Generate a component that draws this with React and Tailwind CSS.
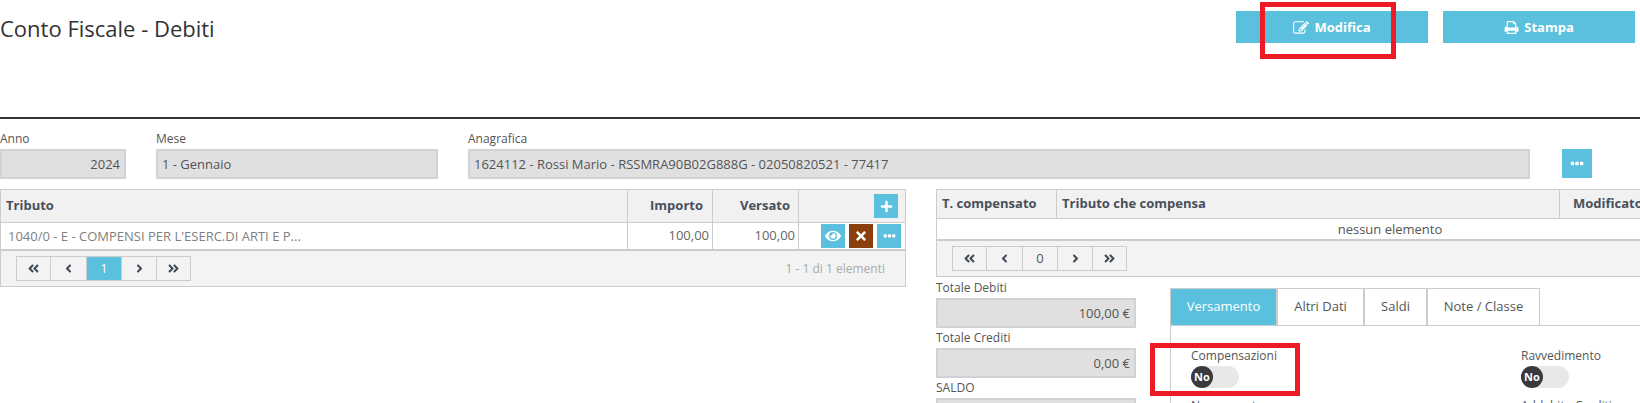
import React from "react";
import { FaPlus, FaEye, FaTimes, FaAngleDoubleLeft, FaAngleLeft, FaAngleRight, FaAngleDoubleRight } from "react-icons/fa";

const Fa4 = ({ d, className = "" }) => (
  <svg viewBox="0 0 1792 1792" fill="currentColor" className={className}><path d={d} /></svg>
);
const EDIT = "M888 1184l116-116-152-152-116 116v56h96v96h56zm440-720q-16-16-33 1l-350 350q-17 17-1 33t33-1l350-350q17-17 1-33zm80 594v190q0 119-84.5 203.5t-203.5 84.5h-832q-119 0-203.5-84.5t-84.5-203.5v-832q0-119 84.5-203.5t203.5-84.5h832q63 0 117 25 15 7 18 23 3 17-9 29l-49 49q-14 14-32 8-23-6-45-6h-832q-66 0-113 47t-47 113v832q0 66 47 113t113 47h832q66 0 113-47t47-113v-126q0-13 9-22l64-64q15-15 35-7t20 29zm-96-738l288 288-672 672h-288v-288zm444 132l-92 92-288-288 92-92q28-28 68-28t68 28l152 152q28 28 28 68t-28 68z";
const PRINT = "M448 1536h896v-256h-896v256zm0-640h896v-384h-160q-40 0-68-28t-28-68v-160h-640v640zm1152 64q0-26-19-45t-45-19-45 19-19 45 19 45 45 19 45-19 19-45zm128 0v416q0 13-9.5 22.5t-22.5 9.5h-224v160q0 40-28 68t-68 28h-960q-40 0-68-28t-28-68v-160h-224q-13 0-22.5-9.5t-9.5-22.5v-416q0-79 56.5-135.5t135.5-56.5h64v-544q0-40 28-68t68-28h672q40 0 88 20t76 48l152 152q28 28 48 76t20 88v256h64q79 0 135.5 56.5t56.5 135.5z";
const DOTS = "M576 736v192q0 40-28 68t-68 28h-192q-40 0-68-28t-28-68v-192q0-40 28-68t68-28h192q40 0 68 28t28 68zm512 0v192q0 40-28 68t-68 28h-192q-40 0-68-28t-28-68v-192q0-40 28-68t68-28h192q40 0 68 28t28 68zm512 0v192q0 40-28 68t-68 28h-192q-40 0-68-28t-28-68v-192q0-40 28-68t68-28h192q40 0 68 28t28 68z";

const Field = ({ label, value, right, className = "" }) => (
  <div className={className}>
    <div className="h-[20px] text-[12px] leading-[20px] text-[#555]">{label}</div>
    <div className={`h-[30px] bg-[#e0e0e0] border-2 border-[#cfd2d6] text-[13px] leading-[27px] text-[#555] px-1 whitespace-nowrap overflow-hidden ${right ? "text-right" : ""}`}>{value}</div>
  </div>
);

const Pager = ({ page, active }) => {
  const cells = [[<FaAngleDoubleLeft />, 33], [<FaAngleLeft />, 36], [page, 35], [<FaAngleRight />, 35], [<FaAngleDoubleRight />, 34]];
  return (
    <div className="flex h-[25px] border border-[#ccc]">
      {cells.map(([c, w], i) => (
        <div key={i} style={{ width: w }} className={`flex items-center justify-center text-[13px] ${i ? "border-l border-[#ccc]" : ""} ${i === 2 ? (active ? "bg-[#5bc0de] text-white" : "text-[#555]") : "text-[#444b58]"}`}>{c}</div>
      ))}
    </div>
  );
};

const Btn = ({ children, color = "bg-[#5bc0de]" }) => (
  <div className={`w-6 h-6 flex items-center justify-center text-white ${color}`}>{children}</div>
);

const Toggle = () => (
  <div className="w-12 h-[22px] rounded-full bg-[#e8e8e8]">
    <div className="w-[22px] h-[22px] rounded-full bg-[#3a3a3e] text-white text-[11px] font-bold leading-[22px] text-center">No</div>
  </div>
);

const Th = ({ children, className = "" }) => (
  <div className={`h-full flex items-center text-[13px] font-bold text-[#484f5b] whitespace-nowrap ${className}`}>{children}</div>
);

export default function App() {
  return (
    <div className="relative w-[1640px] h-[403px] overflow-hidden bg-white font-['Open_Sans',sans-serif]">
      <div className="flex h-[117px] items-start">
        <h1 className="mt-[10px] text-[22px] leading-[36px] text-[#333]">Conto Fiscale - Debiti</h1>
        <div className="ml-auto mt-[11px] mr-[5px] flex gap-[15px]">
          <div className="w-[192px] h-8 pt-px bg-[#5bc0de] text-white text-[13px] font-bold flex items-center justify-center gap-[5px]"><Fa4 d={EDIT} className="w-[16px] h-[16px]" />Modifica</div>
          <div className="w-[192px] h-8 pt-px bg-[#5bc0de] text-white text-[13px] font-bold flex items-center justify-center gap-[5px]"><Fa4 d={PRINT} className="w-[15px] h-[15px]" />Stampa</div>
        </div>
      </div>
      <div className="h-[2px] bg-[#333]" />

      <div className="flex mt-[10px]">
        <Field className="w-[126px]" label="Anno" value="2024" right />
        <Field className="w-[282px] ml-[30px]" label="Mese" value="1 - Gennaio" />
        <Field className="w-[1062px] ml-[30px]" label="Anagrafica" value="1624112 - Rossi Mario - RSSMRA90B02G888G - 02050820521 - 77417" />
        <div className="ml-[32px] mt-[20px] w-[30px] h-[29px] bg-[#5bc0de] flex items-center justify-center text-white"><Fa4 d={DOTS} className="w-[16px] h-[16px]" /></div>
      </div>

      <div className="flex mt-[10px] items-start">
        <div className="w-[906px] border border-[#ccc] shrink-0">
          <div className="flex h-[33px] bg-[#f1f1f1] border-b border-[#ccc]">
            <Th className="w-[626px] pl-[5px]">Tributo</Th>
            <Th className="w-[85px] justify-end pr-[9px] border-l border-[#ccc]">Importo</Th>
            <Th className="w-[86px] justify-end pr-[8px] border-l border-[#ccc]">Versato</Th>
            <div className="flex-1 border-l border-[#ccc] flex items-center justify-end pr-[7px]"><Btn><FaPlus className="text-[13px]" /></Btn></div>
          </div>
          <div className="flex h-[28px] border-b-2 border-[#ccc] text-[13px]">
            <div className="w-[626px] pl-[7px] leading-[26px] text-[#808080] whitespace-nowrap">1040/0 - E - COMPENSI PER L'ESERC.DI ARTI E P...</div>
            <div className="w-[85px] text-right pr-[3px] leading-[25px] text-[#666] border-l border-[#ccc]">100,00</div>
            <div className="w-[86px] text-right pr-[3px] leading-[25px] text-[#666] border-l border-[#ccc]">100,00</div>
            <div className="flex-1 border-l border-[#ccc] flex justify-end items-start pt-[1px] pr-[4px] gap-1">
              <Btn><FaEye className="text-[16px]" /></Btn>
              <Btn color="bg-[#8a3f0c]"><FaTimes className="text-[14px]" /></Btn>
              <Btn><Fa4 d={DOTS} className="w-[15px] h-[15px]" /></Btn>
            </div>
          </div>
          <div className="flex h-[35px] items-center justify-between bg-[#f3f3f3] pl-[15px] pr-[20px]">
            <Pager page="1" active />
            <span className="text-[12px] text-[#aaa]">1 - 1 di 1 elementi</span>
          </div>
        </div>

        <div className="ml-[30px] flex-1 min-w-0 overflow-hidden">
          <div className="border-t border-l border-[#ccc]">
            <div className="flex h-[29px] bg-[#f1f1f1] border-b border-[#ccc]">
              <Th className="w-[119px] pl-[5px] shrink-0">T. compensato</Th>
              <Th className="w-[503px] pl-[5px] border-l border-[#ccc] shrink-0">Tributo che compensa</Th>
              <Th className="flex-1 pl-[13px] border-l border-[#ccc]">Modificato</Th>
            </div>
            <div className="h-[22px] border-b-2 border-[#ccc]">
              <div className="w-[906px] text-center text-[13px] leading-[20px] text-[#555]">nessun elemento</div>
            </div>
            <div className="h-[36px] bg-[#f3f3f3] border-b border-[#ccc] flex items-center pl-[15px]"><Pager page="0" /></div>
          </div>
          <div className="flex">
            <div className="w-[200px] shrink-0 mt-px">
              <Field label="Totale Debiti" value="100,00 €" right />
              <Field label="Totale Crediti" value="0,00 €" right />
              <Field label="SALDO" value="" right />
            </div>
            <div className="ml-[34px] flex-1 mt-[11px]">
              <div className="flex h-[38px] border-b border-[#ccc] text-[13px] text-[#555]">
                <div className="w-[108px] h-[38px] border border-[#ccc] border-r-2 bg-[#5bc0de] text-white flex items-center justify-center">Versamento</div>
                <div className="w-[87px] h-[38px] border-y border-r-2 border-[#ccc] flex items-center justify-center">Altri Dati</div>
                <div className="w-[63px] h-[38px] border-y border-r-2 border-[#ccc] flex items-center justify-center">Saldi</div>
                <div className="w-[112px] h-[38px] border-y border-r border-[#ccc] flex items-center justify-center">Note / Classe</div>
              </div>
              <div className="border-l border-[#ccc] h-[100px] pl-[20px] pt-[20px] flex text-[12px] leading-[18px] text-[#555]">
                <div className="w-[330px]">
                  <div className="h-[20px] leading-[20px]">Compensazioni</div>
                  <Toggle />
                  <div className="mt-[9px]">Numero rate</div>
                </div>
                <div>
                  <div className="h-[20px] leading-[20px]">Ravvedimento</div>
                  <Toggle />
                  <div className="mt-[9px]">Addebito Crediti</div>
                </div>
              </div>
            </div>
          </div>
        </div>
      </div>

      <div className="absolute left-[1260px] top-[2px] w-[136px] h-[57px] border-[5px] border-[#ed1c24]" />
      <div className="absolute left-[1150px] top-[343px] w-[150px] h-[53px] border-[5px] border-[#ed1c24]" />
    </div>
  );
}
